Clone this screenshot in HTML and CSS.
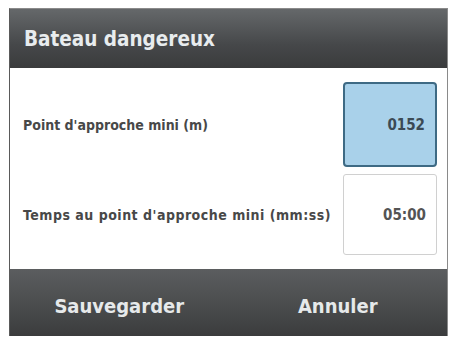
FILE: index.html
```html
<!DOCTYPE html>
<html lang="fr">
<head>
    <meta charset="UTF-8">
    <meta name="viewport" content="width=device-width, initial-scale=1.0">
    <title>Bateau dangereux</title>

    <link rel="stylesheet" href="styles.css">

</head>
<body>

    <div class="dialog">

        <div class="dialog-header">Bateau dangereux</div>

        <div class="dialog-body">
            <div class="field-row">
                <span class="field-label">Point d'approche mini (m)</span>
                <div class="field-box field-active">0152</div>
            </div>

            <div class="field-row">
                <span class="field-label label-long">Temps au point d'approche mini (mm:ss)</span>
                <div class="field-box">05:00</div>
            </div>
        </div>

        <div class="dialog-footer">
            <button class="footer-button">Sauvegarder</button>
            <button class="footer-button">Annuler</button>
        </div>

    </div>

</body>
</html>
```

FILE: styles.css
```css
body {
    margin: 0;
    background-color: #ffffff;
    font-family: "DejaVu Sans Condensed", "DejaVu Sans", sans-serif;
}

.dialog {
    margin: 8px 3px 0 9px;
    border-left: 1px solid #5a5a5a;
    border-right: 1px solid #8a8a8a;
    border-top: 1px solid #8a8a8a;
}

.dialog-header {
    height: 59px;
    background: linear-gradient(#65686a, #46484a 60%, #3a3b3c);
    color: #e8ecee;
    font-size: 20.5px;
    font-weight: bold;
    padding-left: 14px;
    display: flex;
    align-items: center;
}

.dialog-body {
    background-color: #ffffff;
    padding: 14px 10px 14px 13px;
    display: flex;
    flex-direction: column;
    gap: 7px;
}

.field-row {
    display: flex;
    align-items: center;
    justify-content: space-between;
}

.field-label {
    color: #484848;
    font-size: 14px;
    font-weight: bold;
}

.label-long {
    letter-spacing: 0.5px;
}

.field-box {
    width: 94px;
    height: 81px;
    box-sizing: border-box;
    border: 1px solid #d0d0d0;
    border-radius: 3px;
    display: flex;
    align-items: center;
    justify-content: flex-end;
    padding-right: 10px;
    font-size: 15px;
    font-weight: bold;
    color: #545454;
}

.field-active {
    height: 85px;
    background-color: #a9d1ea;
    border: 2px solid #3e6a84;
    border-radius: 4px;
    color: #3b4a55;
}

.dialog-footer {
    height: 67px;
    background: linear-gradient(#5b5d5f, #4a4c4d 55%, #3b3c3d);
    display: flex;
}

.footer-button {
    flex: 1;
    background: none;
    border: none;
    color: #e6e9ea;
    font-family: "DejaVu Sans Condensed", "DejaVu Sans", sans-serif;
    font-size: 20px;
    font-weight: bold;
    padding-top: 8px;
}
```
